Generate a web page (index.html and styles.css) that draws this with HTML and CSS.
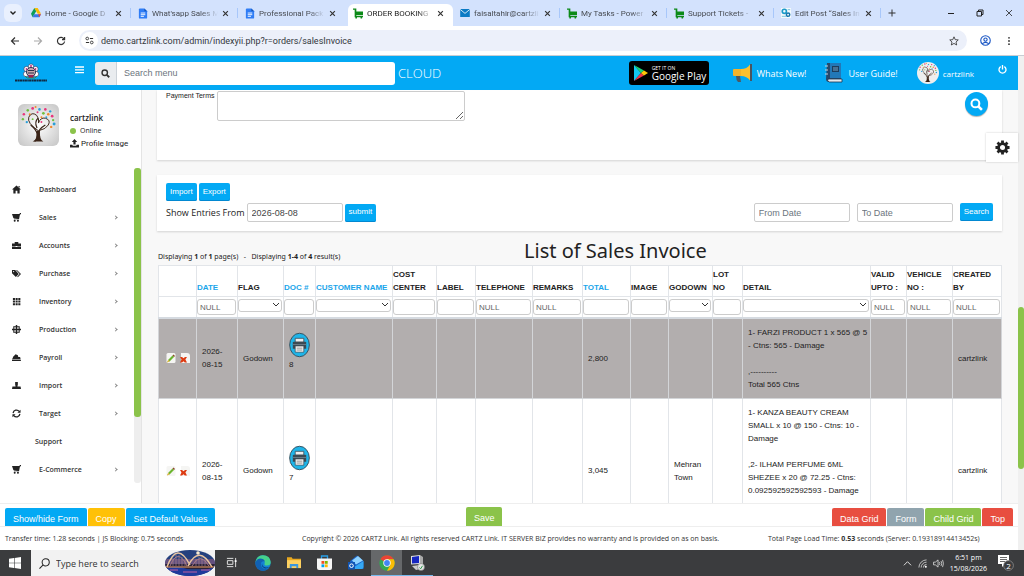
FILE: index.html
```
<!DOCTYPE html>
<html lang="en">
<head>
    <meta charset="UTF-8">
    <meta name="viewport" content="width=device-width, initial-scale=1.0">
    <title>ORDER BOOKING</title>
    <link rel="stylesheet" href="styles.css">
</head>
<body>
    <svg class="sprite" aria-hidden="true">
        <symbol id="i-close" viewBox="0 0 8 8"><path d="M1.3 1.3l5.4 5.4M6.7 1.3L1.3 6.7" fill="none" stroke="#333" stroke-width="1.3"/></symbol>
        <symbol id="i-doc" viewBox="0 0 10 12"><path d="M1.5 0.5h5L9.5 3.5v7q0 1-1 1h-7q-1 0-1-1v-9q0-1 1-1z" fill="#2f7df6"/><path d="M6.5 .5v3h3z" fill="#1555b5"/><path d="M2.5 5.5h5M2.5 7.3h5M2.5 9.1h3.5" stroke="#fff"/></symbol>
        <symbol id="i-cart-green" viewBox="0 0 12 12"><path d="M0 0h4v3.500h8v4.500H4v1h8v1.500H2V1.500H0z" fill="#0c8a18"/><circle cx="3.8" cy="11" r="1.1" fill="#0c8a18"/><circle cx="10" cy="11" r="1.1" fill="#0c8a18"/></symbol>
        <symbol id="i-cart" viewBox="0 0 10 10"><path d="M0 1h8L9 0h1v1L8.800 2 7.800 7H2.200L1.800 6.200h4.900L1.500 5.500z" fill="#222"/><circle cx="3" cy="8.600" r="1.100" fill="#222"/><circle cx="6.600" cy="8.600" r="1.100" fill="#222"/></symbol>
        <symbol id="i-search" viewBox="0 0 12 12"><circle cx="5" cy="5" r="3.6" fill="none" stroke="currentColor" stroke-width="1.9"/><path d="M7.700 7.700L11 11" stroke="currentColor" stroke-width="2.400"/></symbol>
        <symbol id="i-tree" viewBox="0 0 42 42">
            <path d="M17 38q3-2 2.500-8Q19 26 13 21M20 31q1-6 8-10M19.500 24q-3-6 1-10" fill="none" stroke="#3a2418" stroke-width="1.300"/>
            <path d="M15 38q5-1 4.500-11h3q-.5 10 3.500 11z" fill="#3a2418"/>
            <path d="M21 27Q9 19 11 13q3-6 8-2 3 3 2 8 2-6 7-5 6 2 3 7-2 4-10 6" fill="none" stroke="#3a2418" stroke-width="1"/>
            <g fill="#e8367c"><circle cx="15" cy="4" r="1.400"/><circle cx="28" cy="5" r="1.300"/><circle cx="6" cy="10" r="1.300"/><circle cx="35" cy="12" r="1.400"/><circle cx="20" cy="8" r="1"/><circle cx="24" cy="18" r="1"/></g>
            <g fill="#2a9fd8"><circle cx="22" cy="5" r="1.300"/><circle cx="33" cy="7" r="1.200"/><circle cx="37" cy="20" r="1.500"/><circle cx="9" cy="18" r="1.200"/><circle cx="29" cy="13" r="1"/></g>
            <g fill="#6fbf3f"><circle cx="10" cy="6" r="1.300"/><circle cx="26" cy="9" r="1.400"/><circle cx="5" cy="15" r="1.200"/><circle cx="36" cy="16" r="1.200"/><circle cx="15" cy="15" r="1"/></g>
            <g fill="#f28a2a"><circle cx="18" cy="2.500" r="1"/><circle cx="31" cy="10" r="1.300"/><circle cx="12" cy="10" r="1"/><circle cx="34" cy="23" r="1.200"/><circle cx="24" cy="13" r="1"/></g>
        </symbol>
        <symbol id="i-printer" viewBox="0 0 22 26"><ellipse cx="11" cy="13" rx="10.300" ry="12.300" fill="#1fb4e8" stroke="#38505c" stroke-width="1"/><path d="M6.500 6h9v4h-9z" fill="#eee" stroke="#36454f" stroke-width=".8"/><path d="M5 9.500h12q1 0 1 1V17H4v-6.500q0-1 1-1z" fill="#3b4a54"/><path d="M4 12h14v1H4z" fill="#6b7c87"/><path d="M6.500 14h9v6.500h-9z" fill="#f4f4f4" stroke="#36454f" stroke-width=".7"/><path d="M8 16.300h6M8 18.300h6" stroke="#777" stroke-width=".8"/></symbol>
        <symbol id="i-edit" viewBox="0 0 10 10"><rect x=".5" width="9" height="10" rx="1.500" fill="#f5f5f3"/><path d="M1.300 9l1-2.200L6.500 2.600 8 4 3.800 8.200z" fill="#6bb52d"/><path d="M6.500 2.600L7.600 1.500 9 2.900 8 4z" fill="#8c4a2a"/><path d="M.800 9.800l1.500-3 1.500 1.400z" fill="#e9b84c"/></symbol>
        <symbol id="i-delete" viewBox="0 0 10 10"><path d="M1 0h6q3 0 3 3v7H1z" fill="#f5f5f3"/><path d="M0 4h2l1.500 1.200L5 4h2L5.400 6.500 7 9.500H4.800L3.500 8.200 2 9.500H0l1.500-3z" fill="#dd3b12"/></symbol>
    </svg>

    <!-- Browser tabs -->
    <div class="tab-strip">
        <button class="tab-menu" aria-label="Search tabs"><svg viewBox="0 0 8 8" width="8" height="8"><path d="M1.500 2.500L4 5l2.500-2.500" fill="none" stroke="#222" stroke-width="1.400"/></svg></button>
        <div class="tab">
            <svg viewBox="0 0 12 12" width="10" height="10"><path d="M4 0h4l4 7H8z" fill="#fbbc04"/><path d="M4 0L0 7l2 4 4.200-7.200z" fill="#0f9d58"/><path d="M3.500 7.500H12L10 11H2z" fill="#3b78e7"/><path d="M8.500 7.500H12L10 11z" fill="#ea4335"/></svg>
            <span>Home - Google D</span><svg class="x"><use href="#i-close"/></svg>
        </div>
        <div class="tab"><svg class="fav-doc"><use href="#i-doc"/></svg><span>What'sapp Sales M</span><svg class="x"><use href="#i-close"/></svg></div>
        <div class="tab no-line"><svg class="fav-doc"><use href="#i-doc"/></svg><span>Professional Pack</span><svg class="x"><use href="#i-close"/></svg></div>
        <div class="tab active"><svg class="fav"><use href="#i-cart-green"/></svg><span>ORDER BOOKING</span><svg class="x"><use href="#i-close"/></svg></div>
        <div class="tab">
            <svg viewBox="0 0 12 10" width="10" height="8"><path d="M0 0h12v10H0z" fill="#0b7ac4"/><path d="M0 .5l6 5 6-5" fill="none" stroke="#fff" stroke-width="1"/></svg>
            <span>faisaltahir@cartzli</span><svg class="x"><use href="#i-close"/></svg>
        </div>
        <div class="tab"><svg class="fav"><use href="#i-cart-green"/></svg><span>My Tasks - Power</span><svg class="x"><use href="#i-close"/></svg></div>
        <div class="tab"><svg class="fav"><use href="#i-cart-green"/></svg><span>Support Tickets -</span><svg class="x"><use href="#i-close"/></svg></div>
        <div class="tab">
            <svg viewBox="0 0 12 12" width="10" height="10"><path d="M0 0h12v12H0z" fill="#f4fafc"/><circle cx="4" cy="4" r="2.500" fill="none" stroke="#1d9bc9" stroke-width="2"/><circle cx="8.500" cy="8" r="2" fill="none" stroke="#1776ad" stroke-width="1.800"/><path d="M1 10h5M8 2h3" stroke="#64b8d8"/></svg>
            <span>Edit Post “Sales In</span><svg class="x"><use href="#i-close"/></svg>
        </div>
        <button class="new-tab" aria-label="New tab"><svg viewBox="0 0 8 8" width="8" height="8"><path d="M4 .5v7M.5 4h7" stroke="#333"/></svg></button>
        <div class="window-buttons">
            <button aria-label="Minimize"><svg viewBox="0 0 8 8" width="8" height="8"><path d="M1 4.500h6" stroke="#222"/></svg></button>
            <button aria-label="Restore"><svg viewBox="0 0 8 8" width="8" height="8"><path d="M1 2.500h4.500V7H1zM2.500 2.500V1H7v4.500H5.500" fill="none" stroke="#222"/></svg></button>
            <button aria-label="Close"><svg viewBox="0 0 8 8" width="8" height="8"><path d="M1 1l6 6M7 1L1 7" stroke="#222" stroke-width=".8"/></svg></button>
        </div>
    </div>

    <div class="toolbar">
        <button aria-label="Back"><svg viewBox="0 0 10 10" width="10" height="10"><path d="M9 5H1.500M5 1.500L1.500 5 5 8.500" fill="none" stroke="#333" stroke-width="1.200"/></svg></button>
        <button aria-label="Forward"><svg viewBox="0 0 10 10" width="10" height="10"><path d="M1 5h7.500M5 1.500L8.500 5 5 8.500" fill="none" stroke="#aaa" stroke-width="1.200"/></svg></button>
        <button aria-label="Reload"><svg viewBox="0 0 10 10" width="10" height="10"><path d="M8.200 3.200A3.600 3.600 0 1 0 8.600 5.500M8.600 1v2.700H6" fill="none" stroke="#333" stroke-width="1.200"/></svg></button>
        <div class="address">
            <span class="site-info"><svg viewBox="0 0 10 10" width="9" height="9"><circle cx="2.500" cy="2.800" r="1.500" fill="none" stroke="#333"/><circle cx="7.500" cy="7.200" r="1.500" fill="none" stroke="#333"/><path d="M5.500 2.800H9M1 7.200h3.500" stroke="#333" stroke-width="1.300"/></svg></span>
            <input type="text" aria-label="Address" value="demo.cartzlink.com/admin/indexyii.php?r=orders/salesInvoice">
            <svg viewBox="0 0 12 12" width="10" height="10"><path d="M6 1l1.500 3.400 3.600.3-2.700 2.500.8 3.600L6 8.900l-3.200 1.900.8-3.600L.9 4.700l3.600-.3z" fill="none" stroke="#333"/></svg>
        </div>
        <button class="profile" aria-label="Profile"><svg viewBox="0 0 12 12" width="11" height="11"><circle cx="6" cy="6" r="5.200" fill="none" stroke="#1a56c4" stroke-width="1.200"/><circle cx="6" cy="5" r="1.800" fill="none" stroke="#1a56c4" stroke-width="1.200"/><path d="M2.500 9.500q3.500-3 7 0" fill="none" stroke="#1a56c4" stroke-width="1.200"/></svg></button>
        <button aria-label="Browser menu"><svg viewBox="0 0 10 10" width="10" height="10"><g fill="#333"><circle cx="5" cy="1.800" r=".9"/><circle cx="5" cy="5" r=".9"/><circle cx="5" cy="8.200" r=".9"/></g></svg></button>
    </div>

    <div class="page">
        <div class="app">
            <header class="header">
                <svg class="logo" viewBox="0 0 32 20">
                    <g fill="#fff" stroke="#435" stroke-width=".6"><circle cx="16" cy="3.500" r="2.600"/><circle cx="11.500" cy="6" r="2.600"/><circle cx="20.500" cy="6" r="2.600"/><circle cx="11" cy="11" r="2.600"/><circle cx="21" cy="11" r="2.600"/></g>
                    <circle cx="16" cy="9" r="4.500" fill="#c9a9ae" stroke="#253550"/><path d="M13 7.500h6M13 10h6" stroke="#283048"/><path d="M13.500 12h5v3h-5z" fill="#a02052"/>
                    <g fill="#c0267a"><circle cx="16" cy="3" r="1"/><circle cx="11.500" cy="6" r=".9"/><circle cx="20.500" cy="6" r=".9"/></g><path d="M10 13l2 2h8l2-2" fill="none" stroke="#3a8a50"/>
                    <path d="M0 17.500h32" stroke="#102840" stroke-width="2" stroke-dasharray="2.500 .4 1.500 .3"/>
                </svg>
                <button class="burger" aria-label="Toggle menu"><svg viewBox="0 0 9 8" width="9" height="8"><path d="M0 1h9M0 3.800h9M0 6.600h9" stroke="#fff" stroke-width="1.300"/></svg></button>
                <div class="search-group">
                    <button aria-label="Search"><svg class="icon-9"><use href="#i-search"/></svg></button>
                    <input type="search" placeholder="Search menu" aria-label="Search menu">
                </div>
                <span class="cloud">CLOUD</span>
                <a class="play" href="#">
                    <svg viewBox="0 0 14 16" width="14" height="16"><path d="M0 0v16l7-8z" fill="#12c8f0"/><path d="M0 0l10 5.500L7 8z" fill="#18d275"/><path d="M0 16l10-5.500L7 8z" fill="#f0364a"/><path d="M10 5.500L14 8l-4 2.500L7 8z" fill="#ffc808"/></svg>
                    <span><small>GET IT ON</small><b>Google Play</b></span>
                </a>
                <a class="news" href="#">
                    <svg viewBox="0 0 20 20" width="20" height="20"><path d="M1 6h10v7H1q-1 0-1-1V7q0-1 1-1z" fill="#f5b32b"/><path d="M8 6q6 0 9-4.500v16Q14 13 8 13z" fill="#fdc02f"/><path d="M17 1h2v17h-2z" fill="#4a5560"/><path d="M3 13h4l1 6H5q-2-2-2-6z" fill="#4f5961"/></svg>
                    Whats New!
                </a>
                <a class="guide" href="#">
                    <svg viewBox="0 0 18 22" width="18" height="22"><path d="M2 1h14v19H4q-3 0-3-3z" fill="#27496b"/><path d="M5 1h11v15H5z" fill="#2278b8"/><path d="M3 17h14v3H4q-2-1-1-3z" fill="#e3e9ee" stroke="#1e3550" stroke-width=".8"/><path d="M7 4h7v6H7z" fill="#1c3c5c"/><path d="M8 6h5M8 8h5" stroke="#8fc0e4" stroke-width=".8"/><path d="M0 4h3M0 8h3M0 12h3" stroke="#c2d0dc"/></svg>
                    User Guide!
                </a>
                <a class="account" href="#"><svg class="account-pic"><use href="#i-tree"/></svg>cartzlink</a>
                <button class="power" aria-label="Log out"><svg viewBox="0 0 10 10" width="9" height="9"><path d="M3 1.800a3.900 3.900 0 1 0 4 0M5 0v5" fill="none" stroke="#fff" stroke-width="1.500"/></svg></button>
            </header>

            <div class="body">
                <aside class="sidebar">
                    <div class="user">
                        <svg class="user-pic"><use href="#i-tree"/></svg>
                        <div class="user-info">
                            <b>cartzlink</b>
                            <span><i class="dot"></i>Online</span>
                            <a href="#"><svg viewBox="0 0 10 10" width="9" height="9"><path d="M5 0l3 3.200H6.200V6H3.800V3.200H2zM0 6.500h2.600q0 1 1 1h2.800q1 0 1-1H10V9.500H0z" fill="#222"/></svg>Profile Image</a>
                        </div>
                    </div>
                    <nav>
                        <ul class="menu">
                            <li><a href="#"><svg viewBox="0 0 10 10"><path d="M5 .5L10 5H8.500v4.500H6V6.500H4v3H1.500V5H0zM7.200 1h1.300v2L7.200 2z" fill="#222"/></svg>Dashboard</a></li>
                            <li class="more"><a href="#"><svg><use href="#i-cart"/></svg>Sales</a></li>
                            <li class="more"><a href="#"><svg viewBox="0 0 10 10"><path d="M3 1h4v1.800h3v2.700H0V2.800h3zM0 6h4v.8h2V6h4v3H0z" fill="#222"/></svg>Accounts</a></li>
                            <li class="more"><a href="#"><svg viewBox="0 0 10 10"><path d="M0 1h3.500l4 4.500L4.300 9 0 4.700zM4.500 1h1L10 5.500 6.500 9.200 5.800 8.600 8.500 5.500z" fill="#222"/><circle cx="1.800" cy="2.800" r=".7" fill="#fff"/></svg>Purchase</a></li>
                            <li class="more"><a href="#"><svg viewBox="0 0 10 10"><path d="M1 1h2.300v2.200H1zM4 1h2.300v2.200H4zM7 1h2.300v2.200H7zM1 4h2.300v2.200H1zM4 4h2.300v2.200H4zM7 4h2.300v2.200H7zM1 7h2.300v2.200H1zM4 7h2.300v2.200H4zM7 7h2.300v2.200H7z" fill="#222"/></svg>Inventory</a></li>
                            <li class="more"><a href="#"><svg viewBox="0 0 10 10"><path d="M4.200 0h1.600v10H4.200zM0 4.200h10v1.600H0z" fill="#222"/><path d="M2 2h6v6H2z" fill="none" stroke="#222" stroke-width="1.200"/></svg>Production</a></li>
                            <li class="more"><a href="#"><svg viewBox="0 0 10 10"><path d="M1 4.500L4 1.500l2.500 1L7 4.500h2l1 4.500H0V6h1z" fill="#222"/><path d="M0 7.200h10" stroke="#fff" stroke-width=".6"/></svg>Payroll</a></li>
                            <li class="more"><a href="#"><svg viewBox="0 0 10 10"><path d="M3.500 1h3v3L6 6h3.500L10 9H0l.5-3H4l-.5-2z" fill="#222"/></svg>Import</a></li>
                            <li class="more"><a href="#"><svg viewBox="0 0 10 10"><path d="M1.200 4.500A3.800 3.800 0 0 1 8 2.700M8.800 5.500A3.800 3.800 0 0 1 2 7.300" fill="none" stroke="#222" stroke-width="1.400"/><path d="M9.500.8v3.400H6zM.5 9.200V5.800H4z" fill="#222"/></svg>Target</a></li>
                            <li class="plain"><a href="#">Support</a></li>
                            <li class="more"><a href="#"><svg><use href="#i-cart"/></svg>E-Commerce</a></li>
                        </ul>
                    </nav>
                    <div class="side-scroll"><div class="side-thumb"></div></div>
                </aside>

                <main class="content">
                    <section class="card terms">
                        <label for="terms">Payment Terms</label>
                        <textarea id="terms"></textarea>
                        <button class="find" aria-label="Find"><svg class="icon-13"><use href="#i-search"/></svg></button>
                    </section>

                    <section class="card filter">
                        <div class="filter-row">
                            <button class="btn">Import</button>
                            <button class="btn">Export</button>
                        </div>
                        <div class="filter-row">
                            <label for="entries">Show Entries From</label>
                            <input type="text" id="entries" value="2026-08-08">
                            <button class="btn">submit</button>
                            <div class="range">
                                <input type="text" placeholder="From Date" aria-label="From Date">
                                <input type="text" placeholder="To Date" aria-label="To Date">
                                <button class="btn">Search</button>
                            </div>
                        </div>
                    </section>

                    <div class="list-head">
                        <p>Displaying <b>1</b> of <b>1</b> page(s) &nbsp; - &nbsp; Displaying <b>1-4</b> of <b>4</b> result(s)</p>
                        <h1>List of Sales Invoice</h1>
                    </div>

                    <table class="grid">
                        <colgroup>
                            <col class="w38"><col class="w41"><col class="w46"><col class="w32"><col class="w77"><col class="w44"><col class="w39"><col class="w57"><col class="w50">
                            <col class="w48"><col class="w38"><col class="w44"><col class="w30"><col class="w128"><col class="w36"><col class="w46"><col class="w49">
                        </colgroup>
                        <thead>
                            <tr>
                                <th></th>
                                <th><a href="#">DATE</a></th>
                                <th>FLAG</th>
                                <th><a href="#">DOC #</a></th>
                                <th><a href="#">CUSTOMER NAME</a></th>
                                <th>COST CENTER</th>
                                <th>LABEL</th>
                                <th>TELEPHONE</th>
                                <th>REMARKS</th>
                                <th><a href="#">TOTAL</a></th>
                                <th>IMAGE</th>
                                <th>GODOWN</th>
                                <th>LOT<br>NO</th>
                                <th>DETAIL</th>
                                <th>VALID UPTO :</th>
                                <th>VEHICLE NO :</th>
                                <th>CREATED BY</th>
                            </tr>
                            <tr class="filters">
                                <td></td>
                                <td><input type="text" value="NULL" aria-label="Date"></td>
                                <td><select aria-label="Flag"><option></option></select></td>
                                <td><input type="text" aria-label="Doc number"></td>
                                <td><select aria-label="Customer name"><option></option></select></td>
                                <td><input type="text" aria-label="Cost center"></td>
                                <td><input type="text" aria-label="Label"></td>
                                <td><input type="text" value="NULL" aria-label="Telephone"></td>
                                <td><input type="text" value="NULL" aria-label="Remarks"></td>
                                <td><input type="text" aria-label="Total"></td>
                                <td><input type="text" aria-label="Image"></td>
                                <td><select aria-label="Godown"><option></option></select></td>
                                <td><input type="text" aria-label="Lot number"></td>
                                <td><select aria-label="Detail"><option></option></select></td>
                                <td><input type="text" value="NULL" aria-label="Valid upto"></td>
                                <td><input type="text" value="NULL" aria-label="Vehicle number"></td>
                                <td><input type="text" value="NULL" aria-label="Created by"></td>
                            </tr>
                        </thead>
                        <tbody>
                            <tr class="selected">
                                <td class="actions"><a href="#" aria-label="Edit"><svg><use href="#i-edit"/></svg></a><a href="#" aria-label="Delete"><svg><use href="#i-delete"/></svg></a></td>
                                <td>2026-08-15</td>
                                <td>Godown</td>
                                <td class="doc"><a href="#" aria-label="Print"><svg><use href="#i-printer"/></svg></a>8</td>
                                <td></td><td></td><td></td><td></td><td></td>
                                <td>2,800</td>
                                <td></td><td></td><td></td>
                                <td class="detail">1- FARZI PRODUCT 1 x 565 @ 5 - Ctns: 565 - Damage<br><br>,----------<br>Total 565 Ctns</td>
                                <td></td><td></td>
                                <td>cartzlink</td>
                            </tr>
                            <tr class="tall">
                                <td class="actions"><a href="#" aria-label="Edit"><svg><use href="#i-edit"/></svg></a><a href="#" aria-label="Delete"><svg><use href="#i-delete"/></svg></a></td>
                                <td>2026-08-15</td>
                                <td>Godown</td>
                                <td class="doc"><a href="#" aria-label="Print"><svg><use href="#i-printer"/></svg></a>7</td>
                                <td></td><td></td><td></td><td></td><td></td>
                                <td>3,045</td>
                                <td></td>
                                <td>Mehran Town</td>
                                <td></td>
                                <td class="detail">1- KANZA BEAUTY CREAM SMALL x 10 @ 150 - Ctns: 10 - Damage<br><br>,2- ILHAM PERFUME 6ML SHEZEE x 20 @ 72.25 - Ctns: 0.092592592592593 - Damage</td>
                                <td></td><td></td>
                                <td>cartzlink</td>
                            </tr>
                        </tbody>
                    </table>
                </main>
                <button class="settings" aria-label="Settings"><svg viewBox="0 0 16 16" width="15" height="15"><circle cx="8" cy="8" r="4.200" fill="none" stroke="#222" stroke-width="3"/><g stroke="#222" stroke-width="3"><path d="M8 .5v3M8 12.500v3M.5 8h3M12.500 8h3M2.700 2.700l2 2M11.300 11.300l2 2M13.300 2.700l-2 2M4.700 11.300l-2 2"/></g></svg></button>
            </div>

            <div class="action-bar">
                <div class="actions-left">
                    <button class="act blue">Show/hide Form</button>
                    <button class="act amber">Copy</button>
                    <button class="act blue">Set Default Values</button>
                </div>
                <button class="act green save">Save</button>
                <div class="actions-right">
                    <button class="act red">Data Grid</button>
                    <button class="act grey">Form</button>
                    <button class="act green">Child Grid</button>
                    <button class="act red">Top</button>
                </div>
            </div>
            <footer class="footer">
                <span>Transfer time: 1.28 seconds | JS Blocking: 0.75 seconds</span>
                <span>Copyright © 2026 CARTZ Link. All rights reserved CARTZ Link. IT SERVER BIZ provides no warranty and is provided on as on basis.</span>
                <span>Total Page Load Time: <b>0.53</b> seconds (Server: 0.19318914413452s)</span>
            </footer>
        </div>
        <div class="page-scroll"><div class="page-thumb"></div></div>
    </div>

    <!-- Taskbar -->
    <div class="taskbar">
        <button class="start" aria-label="Start"><svg viewBox="0 0 12 12" width="12" height="12"><path d="M0 1.700l5-.7v4.700H0zM5.600.9L12 0v5.700H5.600zM0 6.300h5V11l-5-.7zM5.600 6.300H12V12l-6.400-.9z" fill="#fff"/></svg></button>
        <div class="task-search">
            <svg viewBox="0 0 12 12" width="11" height="11"><circle cx="7.300" cy="4.700" r="3.900" fill="none" stroke="#222" stroke-width="1.100"/><path d="M4.500 7.500L.5 11.500" stroke="#222" stroke-width="1.100"/></svg>
            <input type="text" placeholder="Type here to search" aria-label="Type here to search">
            <svg class="bridge" viewBox="0 0 50 26"><defs><clipPath id="oval"><ellipse cx="25" cy="13" rx="25" ry="13"/></clipPath></defs><g clip-path="url(#oval)"><path d="M0 0h50v26H0z" fill="#24407e"/><path d="M0 9h50v8H0z" fill="#64507e"/><path d="M0 14h50v5H0z" fill="#2a2238"/><path d="M0 18q12-3 22 1t28-2v9H0z" fill="#203a9c"/><path d="M2 17Q12-10 25 15M23 16Q34-6 47 17" fill="none" stroke="#e8c4a0" stroke-width="1.500"/><path d="M5 16Q13-3 22 16M27 16Q35 1 44 16" fill="none" stroke="#a87884"/><path d="M8 8v8M11 5v11M14 5v11M17 7v9M20 10v6M31 9v7M34 7v9M37 7v9M40 10v6" stroke="#b08a90" stroke-width=".6"/><path d="M0 17h50" stroke="#f0a060"/><path d="M5 20h8M18 22h14M36 20h9" stroke="#c060a0"/><circle cx="33" cy="3" r="1.800" fill="#f8ead0"/></g></svg>
        </div>
        <div class="apps">
            <button aria-label="Task view"><svg viewBox="0 0 12 12" width="11" height="11"><path d="M1 1.500h7M1 10.500h7M1.500 4h6v4h-6zM10.500 1v10" fill="none" stroke="#eee"/><path d="M9.500 3.500h2v2h-2z" fill="#fff"/></svg></button>
            <button aria-label="Edge"><svg viewBox="0 0 16 16" width="16" height="16"><circle cx="8" cy="8" r="7.700" fill="#1484d6"/><path d="M.5 7Q2 0 8 .3q7 .3 7.700 6.700 0 4-4.700 3.500-2 0-1.500-1.500 1-2.500-1.500-3.800Q4 3.500.5 7z" fill="#45d18b"/><path d="M.4 8Q1 4 5 3.500q4 0 5 3Q7 5.500 6 8q-.5 5 4.500 6 2 .3 3.500-1-3 3.500-8 2.500Q.8 14 .4 8z" fill="#1161b4"/><path d="M7 8q0 4 4 4.500 3 .2 4-1.500-2 3-5 2.500Q6 12 7 8z" fill="#0a3f83"/></svg></button>
            <button aria-label="File Explorer"><svg viewBox="0 0 15 13" width="14" height="13"><path d="M0 1h5l1 1.500h9V12H0z" fill="#e8a820"/><path d="M0 4h15v8.500H0z" fill="#fdd060"/><path d="M3 8h9v4.500h-2v-2H5v2H3z" fill="#3b96dd"/></svg></button>
            <button aria-label="Store"><svg viewBox="0 0 15 16" width="15" height="16"><path d="M4.500 4V1h6v3" fill="none" stroke="#2aa0e8" stroke-width="1.300"/><path d="M0 3.500h15V13q0 2-2 2H2q-2 0-2-2z" fill="#f6f6f6"/><path d="M4.500 6h2.800v2.800H4.500z" fill="#f25022"/><path d="M7.900 6h2.800v2.800H7.900z" fill="#7fba00"/><path d="M4.500 9.400h2.800v2.800H4.500z" fill="#00a4ef"/><path d="M7.900 9.400h2.800v2.800H7.900z" fill="#ffb900"/></svg></button>
            <button aria-label="Outlook"><svg viewBox="0 0 16 15" width="16" height="15"><path d="M2 6l7-5.500L15.500 6v8H3z" fill="#1a63c8"/><path d="M4 5.500L10 1l5 4.500-7 4z" fill="#8fd2ff"/><path d="M3 14L15.500 6v6q0 2-2 2z" fill="#35a8f4"/><path d="M0 7h7v7.500H0z" fill="#1055b5"/><circle cx="3.500" cy="10.700" r="1.800" fill="none" stroke="#fff"/></svg></button>
            <button class="running current" aria-label="Chrome"><svg viewBox="0 0 16 16" width="16" height="16"><circle cx="8" cy="8" r="7.700" fill="#34a853"/><path d="M8 8L1.300 4.200A7.700 7.700 0 0 1 14.700 4.200H8z" fill="#ea4335"/><path d="M8 8V4.200h6.700A7.700 7.700 0 0 1 8 15.700L11.300 10z" fill="#fbbc04"/><circle cx="8" cy="8" r="3.700" fill="#fff"/><circle cx="8" cy="8" r="2.900" fill="#4285f4"/></svg></button>
            <button class="running" aria-label="Remote desktop"><svg viewBox="0 0 15 16" width="15" height="16"><path d="M1 1l9-1v9l-9 .5z" fill="#ddd"/><path d="M2 2l7-1v7l-7 .4z" fill="#1626c0"/><path d="M10 0l3 2v8l-3-1z" fill="#aaa"/><path d="M2 11l8-1 4 3-8 2z" fill="#ccc"/><circle cx="11" cy="12" r="3.500" fill="#e6e6e6" stroke="#777" stroke-width=".6"/><path d="M9.500 12.500l1.200 1.300 1.800-3" fill="none" stroke="#2c9a4b"/></svg></button>
        </div>
        <div class="tray">
            <svg viewBox="0 0 10 10" width="9" height="9"><path d="M1 7l4-4 4 4" fill="none" stroke="#eee"/></svg>
            <svg viewBox="0 0 10 10" width="9" height="9"><path d="M1 9.500A8.500 8.500 0 0 1 9.500 1M3.500 9.500a6 6 0 0 1 6-6M6 9.500A3.500 3.500 0 0 1 9.500 6" fill="none" stroke="#ccc"/><circle cx="8.700" cy="8.700" r="1.100" fill="#fff"/></svg>
            <svg viewBox="0 0 12 10" width="11" height="9"><path d="M.5 3.500h2L5.500 1v8L2.500 6.500h-2zM7 3.500q1 1.500 0 3M8.800 2.300q1.600 2.700 0 5.400M10.500 1q2 4 0 8" fill="none" stroke="#ddd" stroke-width=".9"/></svg>
            <time datetime="2026-08-15T18:51">6:51 pm<br>15/08/2026</time>
            <svg class="notify" viewBox="0 0 16 16" width="16" height="16"><path d="M0 0h11v9H7l-3 3V9H0z" fill="#fff"/><path d="M2 2.500h7M2 4.500h7M2 6.500h5" stroke="#444" stroke-width=".8"/><circle cx="10.500" cy="10.500" r="4.900" fill="#3b3c3e" stroke="#999" stroke-width=".7"/><text x="10.500" y="13.500">2</text></svg>
        </div>
    </div>
</body>
</html>
```

FILE: styles.css
```
* {
    box-sizing: border-box;
}
body {
    margin: 0;
    height: 100vh;
    overflow: hidden;
    display: flex;
    flex-direction: column;
    font-family: "Open Sans", sans-serif;
    font-size: 8px;
    color: #222;
    background: #fff;
}
button, input, select, textarea {
    font: inherit;
    color: inherit;
    margin: 0;
}
button {
    border: none;
    background: none;
    padding: 0;
    cursor: pointer;
}
a {
    color: inherit;
    text-decoration: none;
}
svg {
    display: block;
    flex-shrink: 0;
}
.sprite {
    display: none;
}
.icon-9 {
    width: 9px;
    height: 9px;
}
.icon-13 {
    width: 13px;
    height: 13px;
}

/* browser window */
.tab-strip {
    display: flex;
    align-items: stretch;
    height: 26px;
    flex-shrink: 0;
    background: #d3e2fd;
    padding: 4px 5px 0 4px;
}
.tab-menu {
    display: flex;
    align-items: center;
    justify-content: center;
    width: 18px;
    height: 18px;
    margin-right: 2px;
    border-radius: 6px;
    background: #e9f0fe;
}
.tab {
    display: flex;
    align-items: center;
    flex: 0 1 107px;
    min-width: 0;
    padding: 0 9px 4px 7px;
    gap: 4px;
    color: #474b52;
    font-family: Roboto, sans-serif;
    background: linear-gradient(#a8c7fa, #a8c7fa) right 4px / 1px 10px no-repeat;
}
.tab.no-line, .tab.active {
    background: none;
}
.tab.active {
    background: #fff;
    border-radius: 6px 6px 0 0;
    color: #222;
    padding-left: 5px;
    margin-left: 3px;
    flex-basis: 105px;
}
.tab span {
    flex: 1;
    overflow: hidden;
    white-space: nowrap;
    mask-image: linear-gradient(to right, #000 75%, transparent);
}
.fav, .fav-doc {
    width: 10px;
    height: 11px;
}
.x {
    width: 7px;
    height: 7px;
}
.new-tab {
    width: 22px;
    padding: 0 7px 4px;
}
.window-buttons {
    display: flex;
    align-items: center;
    gap: 21px;
    margin-left: auto;
    padding: 0 6px 4px 0;
}
.toolbar {
    display: flex;
    align-items: center;
    height: 30px;
    flex-shrink: 0;
    padding: 0 10px;
    gap: 13px;
    border-bottom: 1px solid #c8cdd3;
}
.address {
    display: flex;
    align-items: center;
    flex: 1;
    height: 21px;
    border-radius: 11px;
    background: #ecf0fa;
    padding: 0 8px 0 2px;
}
.site-info {
    display: flex;
    align-items: center;
    justify-content: center;
    width: 17px;
    height: 17px;
    border-radius: 50%;
    background: #fff;
}
.address input {
    flex: 1;
    border: none;
    background: none;
    padding: 0 3px;
    color: #33373c;
    font-family: Roboto, sans-serif;
    font-size: 9px;
}

/* app shell */
.page {
    display: flex;
    flex: 1;
    min-height: 0;
}
.app {
    display: flex;
    flex-direction: column;
    flex: 1;
    min-width: 0;
}
.page-scroll {
    width: 6px;
    background: #f0f0f0;
    padding-top: 251px;
}
.page-thumb {
    height: 162px;
    border-radius: 3px;
    background: #8bc34a;
}
.header {
    display: flex;
    align-items: center;
    height: 34px;
    flex-shrink: 0;
    padding: 0 11px 0 15px;
    background: #03a9f4;
    color: #fff;
    font-size: 9px;
}
.logo {
    width: 32px;
    height: 20px;
}
.burger {
    margin: 0 11px 6px 28px;
}
.search-group {
    display: flex;
    width: 300px;
    height: 23px;
    border-radius: 3px;
    overflow: hidden;
}
.search-group button {
    display: flex;
    align-items: center;
    justify-content: center;
    width: 22px;
    background: #e9ecef;
    color: #333;
    border-right: 1px solid #ccd2d8;
}
.search-group input {
    flex: 1;
    border: none;
    padding: 0 7px;
    background: #fff;
    color: #495057;
    font-family: "Liberation Sans", Arial, sans-serif;
}
.cloud {
    margin: 0 auto 0 3px;
    font-size: 13px;
    font-weight: 300;
}
.play {
    display: flex;
    align-items: center;
    gap: 4px;
    width: 80px;
    height: 24px;
    padding-left: 5px;
    border-radius: 3px;
    background: #000;
    margin-right: 24px;
}
.play small, .play b {
    display: block;
    font-size: 5px;
    line-height: 6px;
}
.play b {
    font-size: 10px;
    line-height: 11px;
    font-weight: 500;
}
.news, .guide, .account {
    display: flex;
    align-items: center;
    gap: 4px;
}
.news {
    margin-right: 18px;
}
.guide {
    gap: 6px;
    margin-right: 19px;
}
.account {
    font-size: 8px;
    margin-right: 24px;
}
.account-pic {
    width: 22px;
    height: 22px;
    border-radius: 50%;
    background: #eee;
}
.power {
    margin-bottom: 7px;
}
.body {
    display: flex;
    flex: 1;
    min-height: 0;
    position: relative;
}

/* sidebar */
.sidebar {
    position: relative;
    display: flex;
    flex-direction: column;
    width: 142px;
    flex-shrink: 0;
    padding-bottom: 19px;
    border-right: 1px solid #e4e4e4;
}
.user {
    display: flex;
    gap: 11px;
    height: 85px;
    padding: 14px 0 0 18px;
}
.user-pic {
    width: 41px;
    height: 42px;
    border-radius: 6px;
    background: radial-gradient(#fff, #c4c4c4);
}
.user-info {
    padding-top: 7px;
    line-height: 13px;
    font-size: 7px;
}
.user-info b {
    display: block;
    font-weight: 600;
    font-size: 8px;
}
.user-info span, .user-info a {
    display: flex;
    align-items: center;
    gap: 4px;
}
.user-info a {
    gap: 2px;
    font-size: 8px;
    font-family: Roboto, sans-serif;
}
.dot {
    width: 6px;
    height: 6px;
    border-radius: 50%;
    background: #8bc34a;
}
nav {
    flex: 1;
    display: flex;
}
.menu {
    flex: 1;
    display: grid;
    grid-auto-rows: 1fr;
    margin: 0;
    padding: 0 22px 0 12px;
    list-style: none;
    font-size: 7px;
    font-weight: 600;
    color: #333;
}
.menu li {
    display: flex;
    align-items: center;
}
.menu a {
    flex: 1;
    display: flex;
    align-items: center;
    gap: 18px;
}
.menu svg {
    width: 9px;
    height: 9px;
}
.menu .plain {
    padding-left: 23px;
}
.menu .more::after {
    content: "";
    width: 3px;
    height: 3px;
    margin-right: 2px;
    border: solid #888;
    border-width: 1px 1px 0 0;
    box-sizing: border-box;
    transform: rotate(45deg);
}
.side-scroll {
    position: absolute;
    top: 78px;
    right: 0;
    bottom: 20px;
    width: 7px;
    border-radius: 3px;
    background: #eee;
}
.side-thumb {
    height: 79%;
    border-radius: 3px;
    background: #8bc34a;
}

/* content */
.content {
    flex: 1;
    min-width: 0;
    overflow: hidden;
    padding: 0 16px 0 15px;
    background: #f8f8f8;
}
.card {
    background: #fff;
    box-shadow: 0 1px 2px rgba(0,0,0,0.15);
}
.terms {
    position: relative;
    display: flex;
    align-items: flex-start;
    height: 70px;
    margin-bottom: 15px;
    padding-left: 9px;
    font-family: "Liberation Sans", Arial, sans-serif;
    font-size: 7px;
}
.terms label {
    width: 51px;
    white-space: nowrap;
    padding-top: 2px;
}
.terms textarea {
    width: 248px;
    height: 30px;
    margin-top: 1px;
    border: 1px solid #ccc;
    border-radius: 2px;
}
.find {
    position: absolute;
    top: 2px;
    right: 14px;
    display: flex;
    align-items: center;
    justify-content: center;
    width: 23px;
    height: 24px;
    border-radius: 50%;
    background: #03a9f4;
    color: #fff;
    box-shadow: 0 1px 1px rgba(0,0,0,0.3);
}
.settings {
    position: absolute;
    top: 43px;
    right: 0;
    display: flex;
    align-items: center;
    justify-content: center;
    width: 32px;
    height: 29px;
    background: #fff;
    box-shadow: 0 0 2px rgba(0,0,0,0.2);
}
.filter {
    padding: 8px 9px;
    height: 56px;
}
.filter-row {
    display: flex;
    align-items: center;
    gap: 2px;
    margin-bottom: 2px;
}
.filter-row label {
    font-size: 9px;
}
.filter-row input {
    width: 96px;
    height: 19px;
    padding: 0 4px;
    border: 1px solid #ccc;
    border-radius: 2px;
    font-family: "Liberation Sans", Arial, sans-serif;
    font-size: 9px;
    color: #444;
}
::placeholder {
    color: #6c757d;
    opacity: 1;
}
.btn {
    height: 18px;
    padding: 0 4px 2px;
    border-radius: 2px;
    background: #03a9f4;
    box-shadow: inset 0 -1px 0 #0288d1;
    color: #fff;
    font-family: "Liberation Sans", Arial, sans-serif;
    font-size: 8px;
    white-space: nowrap;
}
.range {
    display: flex;
    gap: 7px;
    margin-left: auto;
}
.list-head {
    display: flex;
    align-items: flex-end;
    height: 34px;
    padding-left: 1px;
}
.list-head p {
    width: 366px;
    margin: 0 0 4px;
    font-family: "Noto Sans", sans-serif;
    font-size: 7px;
    white-space: nowrap;
}
.list-head h1 {
    margin: 0;
    font-family: "Noto Sans", sans-serif;
    font-size: 20px;
    line-height: 28px;
    font-weight: 400;
    white-space: nowrap;
}

/* invoice grid */
.grid {
    width: calc(100% - 1px);
    margin-left: 1px;
    table-layout: fixed;
    border-collapse: collapse;
    background: #fff;
    font-family: "Liberation Sans", Arial, sans-serif;
    font-size: 8px;
    line-height: 13px;
}
.w30 { width: 30px; }
.w32 { width: 32px; }
.w36 { width: 36px; }
.w38 { width: 38px; }
.w39 { width: 39px; }
.w41 { width: 41px; }
.w44 { width: 44px; }
.w46 { width: 46px; }
.w48 { width: 48px; }
.w49 { width: 49px; }
.w50 { width: 50px; }
.w57 { width: 57px; }
.w77 { width: 77px; }
.w128 { width: 128px; }
.grid th, .grid td {
    border: 1px solid #e2e5e9;
}
.grid th {
    padding: 2px 0;
    height: 31px;
    text-align: left;
    vertical-align: bottom;
    white-space: normal;
}
.grid th a {
    color: #1aa5ea;
    white-space: nowrap;
}
.grid .filters td {
    height: 21px;
    padding: 2px 1px 1px 0;
    vertical-align: top;
    border-bottom: 2px solid #d5dae0;
}
.filters input, .filters select {
    display: block;
    width: 100%;
    height: 16px;
    padding: 0 2px;
    border: 1px solid #ccc;
    border-radius: 3px;
    background: #fff;
    color: #666;
}
.filters select {
    height: 13px;
    appearance: none;
    background: linear-gradient(45deg, transparent 50%, #333 50%, #333 70%, transparent 70%) right 5px top 3px / 3px 4px no-repeat, linear-gradient(-45deg, transparent 50%, #333 50%, #333 70%, transparent 70%) right 2px top 3px / 3px 4px no-repeat, #fff;
}
.grid tbody td {
    padding: 7px 5px;
    vertical-align: middle;
}
.grid .selected td {
    background: #b2aeae;
    border-color: #d3d5d8;
}
.grid .tall td {
    height: 145px;
}
.grid td.detail {
    padding-right: 2px;
    vertical-align: top;
}
.grid td.doc {
    padding-bottom: 20px;
}
.doc svg {
    width: 21px;
    height: 26px;
}
.actions a {
    display: inline-block;
    margin: 4px 0 0 2px;
}
.actions a + a {
    margin-left: 4px;
}
.actions svg {
    width: 10px;
    height: 10px;
}

/* bottom bars */
.action-bar {
    display: grid;
    grid-template-columns: 46% 1fr auto;
    align-items: start;
    height: 23px;
    flex-shrink: 0;
    overflow: hidden;
    padding-right: 5px;
    border-top: 1px solid #eee;
}
.actions-left, .actions-right {
    display: flex;
    gap: 1px;
    padding-top: 4px;
}
.actions-left {
    padding-left: 5px;
}
.act {
    height: 21px;
    padding: 0 8px;
    border-radius: 2px;
    color: #fff;
    font-family: "Liberation Sans", Arial, sans-serif;
    font-size: 9px;
    white-space: nowrap;
}
.save {
    justify-self: start;
    margin-top: 3px;
}
.blue { background: #03a9f4; }
.amber { background: #ffc107; }
.green { background: #8bc34a; }
.red { background: #e84e40; }
.grey { background: #90a4ae; }
.footer {
    display: grid;
    grid-template-columns: 297px 1fr 250px;
    align-items: center;
    height: 24px;
    flex-shrink: 0;
    padding-left: 5px;
    border-top: 1px solid #eee;
    font-size: 7px;
    white-space: nowrap;
    color: #333;
}

/* taskbar */
.taskbar {
    display: flex;
    align-items: stretch;
    height: 26px;
    flex-shrink: 0;
    background: #3b3c3e;
}
.start {
    width: 31px;
    padding-left: 9px;
}
.task-search {
    display: flex;
    align-items: center;
    width: 184px;
    padding-left: 8px;
    background: #f2f2f2;
}
.task-search input {
    flex: 1;
    min-width: 0;
    border: none;
    background: none;
    padding: 0 6px;
    font-size: 9px;
}
.task-search ::placeholder {
    color: #333;
}
.bridge {
    width: 50px;
    height: 26px;
}
.apps {
    display: flex;
    padding-left: 1px;
}
.apps button {
    display: flex;
    align-items: center;
    justify-content: center;
    width: 31px;
    border-bottom: 1px solid transparent;
}
.apps .running {
    border-bottom-color: #76b9ed;
}
.apps .current {
    background: #66686a;
}
.tray {
    display: flex;
    align-items: center;
    gap: 6px;
    margin-left: auto;
    padding-right: 10px;
    color: #fff;
}
.tray time {
    font-size: 7px;
    line-height: 11px;
    text-align: center;
}
.notify {
    margin-left: 5px;
}
.notify text {
    fill: #fff;
    font-size: 8px;
    text-anchor: middle;
}
```
